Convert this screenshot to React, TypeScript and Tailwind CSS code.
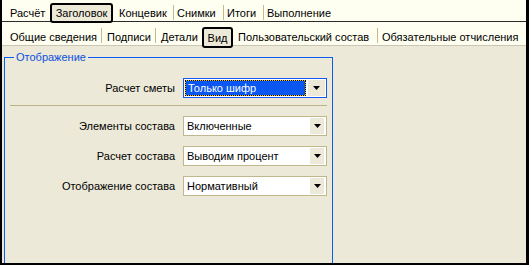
import type { ReactNode } from 'react';

const font = "font-['Liberation_Sans',Arial,sans-serif] text-[11px] text-black";

function Sep() {
  return <div className="w-px h-[15px] bg-[#c8b98c] self-center mt-[3px]" />;
}

function Tab({ children, className }: { children: ReactNode; className: string }) {
  return <div className={`flex items-center whitespace-nowrap ${className}`}>{children}</div>;
}

function ActiveTab({ children, className }: { children: ReactNode; className: string }) {
  return (
    <div
      className={`relative z-10 flex items-center justify-center whitespace-nowrap border-2 border-black rounded-[3px] bg-[#ece9d8] ${className}`}
    >
      {children}
    </div>
  );
}

function Arrow() {
  return (
    <svg width="7" height="4" viewBox="0 0 7 4">
      <polygon points="0,0 7,0 3.5,4" fill="#000" />
    </svg>
  );
}

function Combo({ value, active }: { value: string; active?: boolean }) {
  if (active) {
    return (
      <div className="h-[20px] w-[144px] border border-[#1257f0] bg-white flex p-px">
        <div className="flex-1 bg-[#f4c600]">
          <div className="h-full border border-dotted border-black bg-[#0a56f0] bg-clip-padding text-white flex items-center pl-[2px]">
            {value}
          </div>
        </div>
        <div className="w-[17px] ml-[2px] bg-[#ece9d8] flex items-center justify-center">
          <Arrow />
        </div>
      </div>
    );
  }
  return (
    <div className="h-[20px] w-[144px] border border-[#bfb88e] bg-white flex p-px">
      <div className="flex-1 flex items-center pl-[2px]">{value}</div>
      <div className="w-[14px] mr-[1px] bg-[#ece9d8] flex items-center justify-center">
        <Arrow />
      </div>
    </div>
  );
}

function Row({ label, children }: { label: string; children: ReactNode }) {
  return (
    <div className="grid grid-cols-[170px_144px] gap-x-[8px] items-center">
      <div className="text-right whitespace-nowrap">{label}</div>
      {children}
    </div>
  );
}

export default function App() {
  return (
    <div
      className={`w-[529px] h-[265px] overflow-hidden border-l-2 border-r-[3px] border-b-2 border-black bg-[#ece9d8] flex flex-col ${font}`}
    >
      <div className="h-[22px] shrink-0 flex bg-[#fefef1] border-b border-[#2b2b2b]">
        <Tab className="w-[48px] pl-[8px] pt-[5px]">Расчёт</Tab>
        <ActiveTab className="w-[63px] mt-[3px] h-[20px] self-start">Заголовок</ActiveTab>
        <Tab className="w-[60px] pl-[6px] pt-[5px]">Концевик</Tab>
        <Sep />
        <Tab className="w-[49px] pl-[3px] pt-[5px]">Снимки</Tab>
        <Sep />
        <Tab className="w-[39px] pl-[3px] pt-[5px]">Итоги</Tab>
        <Sep />
        <Tab className="pl-[3px] pt-[5px]">Выполнение</Tab>
      </div>
      <div className="h-[24px] shrink-0 flex bg-[#fefef1] border-b border-[#cac6b4]">
        <Tab className="w-[99px] pl-[8px] pt-[7px]">Общие сведения</Tab>
        <Sep />
        <Tab className="w-[53px] pl-[5px] pt-[7px]">Подписи</Tab>
        <Sep />
        <Tab className="w-[46px] pl-[5px] pt-[7px]">Детали</Tab>
        <ActiveTab className="w-[31px] mt-[5px] h-[21px] self-start pt-px">Вид</ActiveTab>
        <Tab className="w-[144px] pl-[5px] pt-[7px]">Пользовательский состав</Tab>
        <Sep />
        <Tab className="pl-[4px] pt-[7px]">Обязательные отчисления</Tab>
      </div>

      <div className="relative ml-[2px] mt-[11px] w-[329px] h-[240px] shrink-0 border border-[#0a5cf5] pt-[20px]">
        <span className="absolute left-[9px] -top-[8px] px-[2px] bg-[#ece9d8] text-[#0a50e0] leading-[14px]">
          Отображение
        </span>
        <Row label="Расчет сметы">
          <Combo value="Только шифр" active />
        </Row>
        <div className="ml-[5px] mt-[7px] w-[317px] h-px bg-[#b9b189]" />
        <div className="mt-[10px] flex flex-col gap-[10px]">
          <Row label="Элементы состава">
            <Combo value="Включенные" />
          </Row>
          <Row label="Расчет состава">
            <Combo value="Выводим процент" />
          </Row>
          <Row label="Отображение состава">
            <Combo value="Нормативный" />
          </Row>
        </div>
      </div>
    </div>
  );
}
